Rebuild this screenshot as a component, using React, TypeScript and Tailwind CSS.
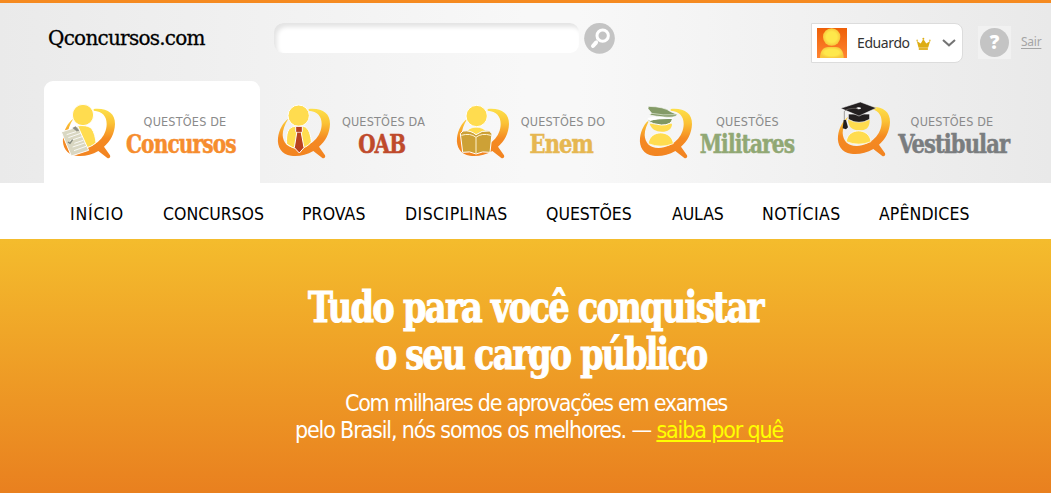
import type { ReactNode } from "react";

const sans = "font-['DejaVu_Sans_Condensed','DejaVu_Sans',sans-serif] [font-stretch:condensed]";
const slab = "font-['DejaVu_Serif_Condensed','DejaVu_Serif',serif] [font-stretch:condensed] font-bold";

function Swoosh({ id, children }: { id: string; children: ReactNode }) {
  return (
    <svg viewBox="0 0 180 180" className="size-[60px] shrink-0" aria-hidden="true">
      <defs>
        <linearGradient id={id} x1="0" y1="20" x2="0" y2="165" gradientUnits="userSpaceOnUse">
          <stop offset="0" stopColor="#fde04a" />
          <stop offset="0.3" stopColor="#fbc235" />
          <stop offset="0.62" stopColor="#f58a22" />
          <stop offset="1" stopColor="#f28421" />
        </linearGradient>
      </defs>
      <path
        d="M101 21C140 17 166 33 165 66C164 95 151 118 132 134L150 160C153 167 146 171 141 167L115 147C94 159 70 164 48 161C20 158 6 134 9 108C12 82 24 62 40 50C29 67 23 84 23 99C24 123 40 139 66 138C108 136 140 103 140 66C140 43 128 28 101 26Z"
        fill={`url(#${id})`}
      />
      {children}
    </svg>
  );
}

function ConcursosIcon() {
  return (
    <Swoosh id="swoosh-concursos">
      <path d="M44 77C52 68 84 68 95 80C103 90 107 110 108 122C98 131 86 137 74 138L60 90Z" fill="#ffdc4f" stroke="#fff" strokeWidth="3" />
      <circle cx="69" cy="39" r="32" fill="#ffdc4f" stroke="#fff" strokeWidth="3" />
      <path d="M4 90L54 74L86 145L34 162Z" fill="#d9d7c2" stroke="#fff" strokeWidth="3" />
      <path d="M37 78L47 73L58 86L50 88Z" fill="#8c8e85" />
      <g stroke="#fff" strokeWidth="2.5">
        <path d="M20 98L48 89M25 107L62 94M31 116L66 104M43 124L70 115M38 135L74 123M42 146L78 133" />
      </g>
      <path d="M24 120L30 124L38 113" fill="none" stroke="#84887d" strokeWidth="4" />
    </Swoosh>
  );
}

function OabIcon() {
  return (
    <Swoosh id="swoosh-oab">
      <path d="M35 126C33 95 38 75 60 73H85C103 75 108 105 109 120C98 134 86 137 74 142Q50 139 35 126Z" fill="#ffdc4f" stroke="#fff" strokeWidth="3" />
      <circle cx="71" cy="41" r="32" fill="#ffdc4f" stroke="#fff" strokeWidth="3" />
      <path d="M62 73H82V88L79 93L87 137L73 153L58 137L65 93L62 88Z" fill="#b9411e" stroke="#fff" strokeWidth="3" />
      <path d="M64 91H80" stroke="#fff" strokeWidth="2" />
    </Swoosh>
  );
}

function EnemIcon() {
  return (
    <Swoosh id="swoosh-enem">
      <path d="M36 92C43 70 91 70 98 92L66 112Z" fill="#ffdc4f" stroke="#fff" strokeWidth="2" />
      <circle cx="68" cy="42" r="32" fill="#ffdc4f" stroke="#fff" strokeWidth="3" />
      <path d="M19 95L27 87Q50 84 66 98Q83 84 106 87L114 95L108 151Q85 146 66 156Q47 146 26 151Z" fill="#cda136" stroke="#fff" strokeWidth="3" />
      <path d="M22 100Q49 92 66 106Q83 92 111 100M66 106V153" fill="none" stroke="#fff3d0" strokeWidth="3" />
    </Swoosh>
  );
}

function MilitaresIcon() {
  return (
    <Swoosh id="swoosh-militares">
      <path d="M38 65H105C105 81 92 89 75 89C56 89 42 80 38 65Z" fill="#ffdc4f" />
      <path d="M34 125C38 82 104 82 109 125Q72 140 34 125Z" fill="#ffdc4f" stroke="#fff" strokeWidth="2" />
      <path d="M29 55Q66 49 107 49Q104 70 73 69Q48 68 29 55Z" fill="#809763" stroke="#fff" strokeWidth="3" />
      <path d="M31 48Q68 38 112 46L105 51Q68 47 39 57Z" fill="#fff" />
      <path d="M34 13Q82 14 101 29L122 38Q113 48 82 45Q58 43 37 39L44 34L33 20Z" fill="#849b67" stroke="#fff" strokeWidth="2" />
      <path d="M44 34Q77 41 116 38" fill="none" stroke="#e9eedf" strokeWidth="2" />
    </Swoosh>
  );
}

function VestibularIcon() {
  return (
    <Swoosh id="swoosh-vestibular">
      <path d="M39 60H104C104 86 92 91 73 91C53 91 40 83 39 60Z" fill="#ffdc4f" />
      <path d="M34 125C38 82 103 82 108 125Q72 140 34 125Z" fill="#ffdc4f" stroke="#fff" strokeWidth="2" />
      <path d="M40 42H104V58Q72 76 40 58Z" fill="#231f20" stroke="#fff" strokeWidth="2" />
      <path d="M17 25L76 6L124 24L72 48Z" fill="#231f20" stroke="#fff" strokeWidth="1.5" />
      <ellipse cx="71" cy="25" rx="7" ry="3" fill="#fff" />
      <path d="M69 25Q35 24 28 34V64" fill="none" stroke="#77736f" strokeWidth="2" />
      <path d="M26 60H33L39 82L33 88L23 85Z" fill="#231f20" />
    </Swoosh>
  );
}

const tabs = [
  { icon: <ConcursosIcon />, label: "QUESTÕES DE", name: "Concursos", box: "w-[216px] pl-4 rounded-t-[9px] bg-white", text: "w-[126px]", labelCls: "left-[2px]", nameCls: "text-[#f68d2e] -left-[2px] scale-x-[0.86]", iconCls: "" },
  { icon: <OabIcon />, label: "QUESTÕES DA", name: "OAB", box: "ml-[15px]", text: "w-[95px]", labelCls: "left-px", nameCls: "text-[#bf4a2b] -left-px scale-x-[0.85]", iconCls: "" },
  { icon: <EnemIcon />, label: "QUESTÕES DO", name: "Enem", box: "ml-6", text: "w-[96px]", labelCls: "left-px", nameCls: "text-[#e6b751] -left-px scale-x-[0.9]", iconCls: "" },
  { icon: <MilitaresIcon />, label: "QUESTÕES", name: "Militares", box: "ml-[27px]", text: "w-[99px]", labelCls: "left-px", nameCls: "text-[#91a874] scale-x-[0.86]", iconCls: "" },
  { icon: <VestibularIcon />, label: "QUESTÕES DE", name: "Vestibular", box: "ml-[39px]", text: "w-[116px]", labelCls: "-left-px", nameCls: "text-[#7a7d7f] left-px scale-x-[0.9]", iconCls: "-mt-0.5" },
];

const nav = [
  ["INÍCIO", "w-[93px] tracking-[0.8px]"],
  ["CONCURSOS", "w-[139px] tracking-[0px]"],
  ["PROVAS", "w-[103px] tracking-[0.1px]"],
  ["DISCIPLINAS", "w-[141px] tracking-[0.45px]"],
  ["QUESTÕES", "w-[126px] tracking-[0px]"],
  ["AULAS", "w-[90px] -tracking-[0.1px]"],
  ["NOTÍCIAS", "w-[117px] tracking-[0.5px]"],
  ["APÊNDICES", "w-[110px] tracking-[0.1px]"],
];

export default function App() {
  return (
    <div className={`flex h-[497px] w-[1051px] flex-col overflow-hidden bg-white ${sans}`}>
      <header className="flex h-[183px] flex-col border-t-[3px] border-[#f58a20] bg-[linear-gradient(90deg,#eaeaea,#f8f8f8_50%,#f8f8f8_55%,#e9e9e9)]">
        <div className="flex h-[78px] items-start">
          <a className="ml-12 mt-[22px] w-[226px] whitespace-nowrap font-['DejaVu_Serif',serif] text-[20px] leading-[26px] tracking-[-0.75px] text-black [-webkit-text-stroke:0.3px] [font-stretch:normal]">
            Qconcursos.com
          </a>
          <input
            aria-label="Buscar"
            className="mt-5 h-[30px] w-[305px] rounded-[9px] bg-white px-3 text-sm shadow-[inset_3px_4px_4px_#e4e4e4] outline-none"
          />
          <button aria-label="Pesquisar" className="ml-[5px] mt-5 h-[31px] w-[31px]">
            <svg viewBox="0 0 93 93" className="size-[31px]">
              <circle cx="46.5" cy="46" r="46" fill="#c4c4c4" />
              <circle cx="56" cy="38" r="17" fill="none" stroke="#fff" strokeWidth="9" />
              <path d="M40 54L33 61" stroke="#fff" strokeWidth="6" />
              <path d="M36 59L27 69" stroke="#fff" strokeWidth="12" strokeLinecap="round" />
            </svg>
          </button>
          <div className="ml-[196px] mt-5 flex h-10 w-[152px] items-center rounded-r-[8px] border border-[#dcdcdc] bg-white pl-[5px]">
            <svg viewBox="0 0 90 90" className="size-[30px]">
              <defs>
                <linearGradient id="avatar-bg" x1="0" y1="0" x2="0" y2="1">
                  <stop offset="0" stopColor="#ee5f08" />
                  <stop offset="1" stopColor="#ff8532" />
                </linearGradient>
                <radialGradient id="avatar-person">
                  <stop offset="0.6" stopColor="#fee84b" />
                  <stop offset="1" stopColor="#f8c83d" />
                </radialGradient>
              </defs>
              <path d="M0 0H90V90H0Z" fill="url(#avatar-bg)" />
              <path d="M9 90C9 68 20 57 33 57H57C71 57 80 70 80 90Z" fill="url(#avatar-person)" />
              <circle cx="44" cy="27" r="26" fill="url(#avatar-person)" />
            </svg>
            <span className="-mt-px ml-2.5 w-[54px] whitespace-nowrap font-['Noto_Sans',sans-serif] text-[14px] leading-5 tracking-[-0.4px] text-[#333] [font-stretch:normal]">
              Eduardo
            </span>
            <svg viewBox="0 0 45 40" className="ml-[5px] h-[13px] w-[15px]">
              <path d="M7 32L2 12L14 20L22 6L31 20L43 12L37 32Z" fill="#ddad14" />
              <path d="M8 32H36V40H8Z" fill="#e2b62f" />
              <circle cx="22" cy="5" r="3" fill="#ddad14" />
              <circle cx="3" cy="11" r="3" fill="#e9c95c" />
              <circle cx="42" cy="11" r="3" fill="#e9c95c" />
            </svg>
            <svg viewBox="0 0 42 24" className="ml-[11px] h-2 w-3.5">
              <path d="M3 3L21 19L39 3" fill="none" stroke="#747474" strokeWidth="6" />
            </svg>
          </div>
          <div className="ml-[15px] mt-[23px] flex size-[33px] items-center justify-center bg-[#f1f1f1]">
            <span className="flex size-[29px] items-center justify-center rounded-full bg-[#c4c4c4] font-['Open_Sans',sans-serif] text-[19px] leading-none font-extrabold text-white [font-stretch:normal]">
              ?
            </span>
          </div>
          <a className="ml-2.5 mt-[30px] font-['Noto_Sans',sans-serif] text-[12px] leading-[18px] tracking-[-0.25px] text-[#a5a5a5] underline underline-offset-2 [font-stretch:normal]">
            Sair
          </a>
        </div>
        <div className="flex h-[102px] pl-[44px]">
          {tabs.map((tab) => (
            <a key={tab.name} className={`flex shrink-0 pt-[21px] ${tab.box}`}>
              <span className={tab.iconCls}>{tab.icon}</span>
              <span className={`flex flex-col items-center pt-[11px] whitespace-nowrap ${tab.text}`}>
                <span className={`relative text-[12.5px] leading-[18px] tracking-[0.2px] text-[#8a8a8a] ${tab.labelCls}`}>
                  {tab.label}
                </span>
                <span className={`relative text-[26px] leading-[26px] tracking-[-1px] [-webkit-text-stroke:0.5px] ${slab} ${tab.nameCls}`}>
                  {tab.name}
                </span>
              </span>
            </a>
          ))}
        </div>
      </header>
      <nav className="flex h-14 shrink-0 items-center pt-[7px] pl-[70px] text-[17.5px] text-black">
        {nav.map(([label, cls]) => (
          <a key={label} className={`whitespace-nowrap ${cls}`}>{label}</a>
        ))}
      </nav>
      <main className="flex h-[254px] flex-col items-center bg-[linear-gradient(#f4bc2d,#e9801f)] text-white">
        <h1 className={`mt-[45px] flex w-full flex-col items-center pl-5 text-[43px] leading-[47px] tracking-[-2px] whitespace-nowrap [-webkit-text-stroke:1px] ${slab}`}>
          <span className="scale-x-[0.87]">Tudo para você conquistar</span>
          <span className="relative left-[5px] scale-x-[0.86]">o seu cargo público</span>
        </h1>
        <p className="mt-3 ml-[27px] flex flex-col items-center text-[23px] leading-[27px] whitespace-nowrap">
          <span className="mr-[6px] tracking-[-1.27px]">Com milhares de aprovações em exames</span>
          <span className="tracking-[-1.14px]">
            pelo Brasil, nós somos os melhores. —{" "}
            <a className="text-[#ff0] underline decoration-2 underline-offset-2">saiba por quê</a>
          </span>
        </p>
      </main>
    </div>
  );
}
